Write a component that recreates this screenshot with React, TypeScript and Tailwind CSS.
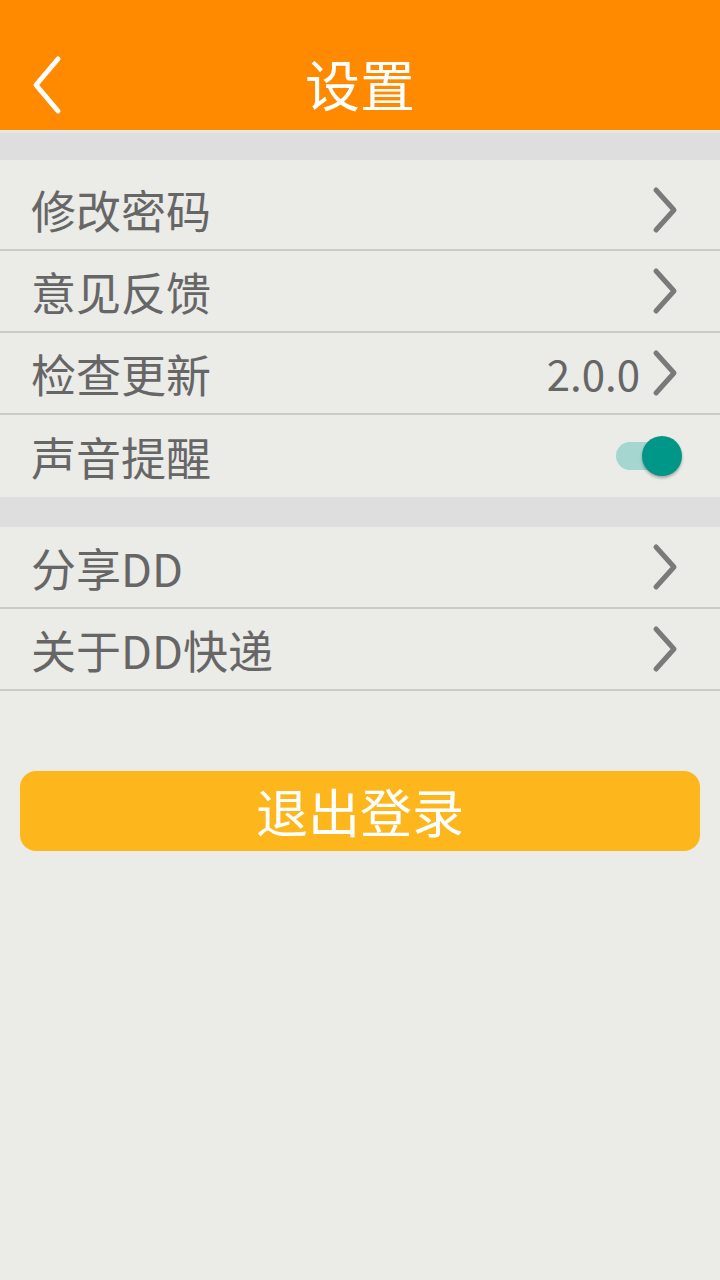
import React from 'react';

const font = { fontFamily: '"Noto Sans CJK SC", "Noto Sans", sans-serif' };

function Chevron() {
  return (
    <svg width="30" height="48" viewBox="0 0 30 48" className="shrink-0">
      <path d="M6 4 L24 24 L6 44" fill="none" stroke="#7a7a7a" strokeWidth="5" strokeLinecap="round" strokeLinejoin="round" />
    </svg>
  );
}

function Toggle() {
  return (
    <div className="relative w-[70px] h-[44px] shrink-0">
      <div className="absolute left-[1px] top-[8px] w-[50px] h-[28px] rounded-full bg-[#a6d6d0]" />
      <div className="absolute left-[27px] top-[2px] w-[40px] h-[40px] rounded-full bg-[#009688] shadow-[0_2px_3px_rgba(0,0,0,0.3)]" />
    </div>
  );
}

interface RowProps {
  label: string;
  value?: string;
  toggle?: boolean;
  className?: string;
  last?: boolean;
}

function Row({ label, value, toggle, className, last }: RowProps) {
  return (
    <div className={`flex items-center pl-[31px] pr-[40px] ${last ? '' : 'border-b-2 border-[#cacac6]'} ${className ?? 'h-[82px]'}`}>
      <span className="flex-1 text-[45px] leading-none text-[#666666]">{label}</span>
      {value && <span className="text-[42px] leading-none text-[#666666] mr-[10px]">{value}</span>}
      {toggle ? <div className="-mr-[5px]"><Toggle /></div> : <Chevron />}
    </div>
  );
}

export default function App() {
  return (
    <div className="w-[720px] h-[1280px] bg-[#ebebe8] overflow-hidden" style={font}>
      <header className="h-[130px] bg-[#ff8a00] flex items-center justify-center relative">
        <svg width="40" height="60" viewBox="0 0 40 60" className="absolute left-[28px] top-[55px]">
          <path d="M30 4 L8 30 L30 56" fill="none" stroke="#ffffff" strokeWidth="5" strokeLinecap="round" strokeLinejoin="round" />
        </svg>
        <h1 className="text-[55px] leading-none text-white mt-[34px]">设置</h1>
      </header>
      <div className="h-[30px] bg-[#dedede] border-t-[3px] border-[#e6e6e4]" />
      <div>
        <Row label="修改密码" className="h-[91px] pt-[10px]" />
        <Row label="意见反馈" />
        <Row label="检查更新" value="2.0.0" />
        <Row label="声音提醒" toggle last />
      </div>
      <div className="h-[30px] bg-[#dedede]" />
      <div>
        <Row label="分享DD" className="h-[82px]" />
        <Row label="关于DD快递" />
      </div>
      <div className="px-[20px] mt-[80px]">
        <button className="w-full h-[80px] rounded-[16px] bg-[#fdb71c] text-white text-[52px] leading-none flex items-center justify-center">
          退出登录
        </button>
      </div>
    </div>
  );
}
